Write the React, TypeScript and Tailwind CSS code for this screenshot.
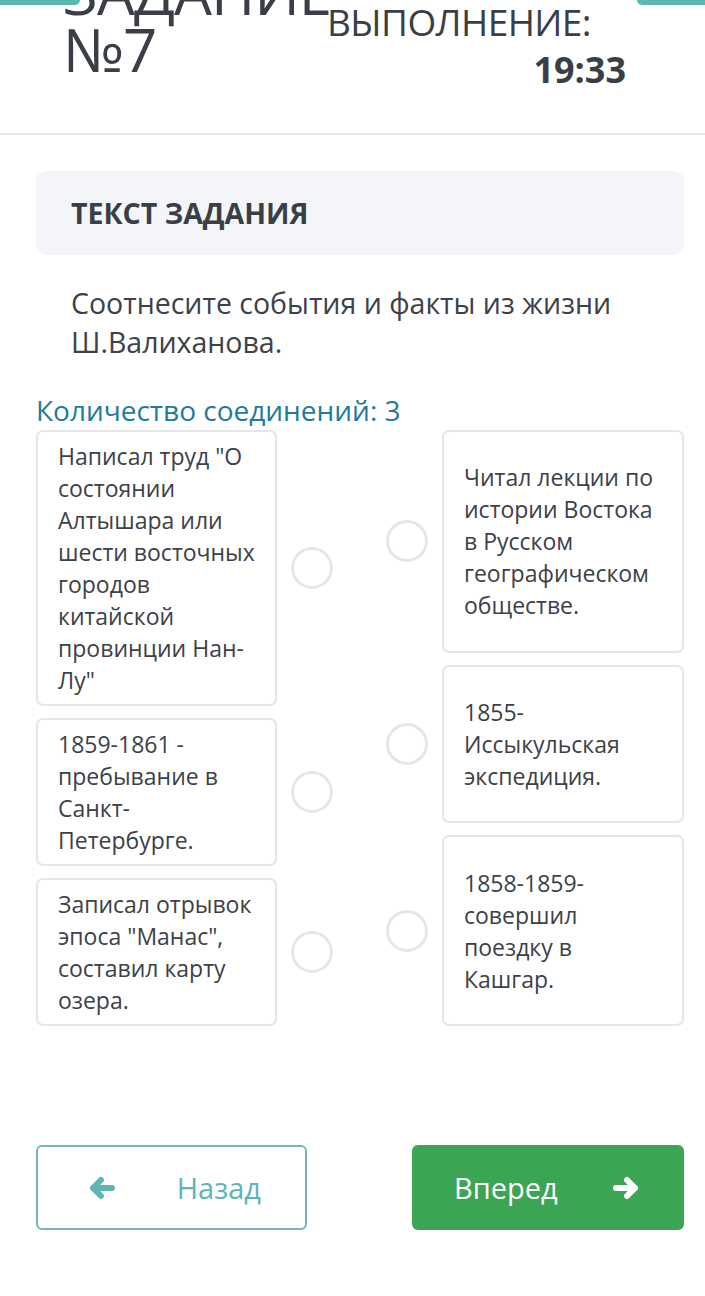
const LEFT_ITEMS = [
  'Написал труд "О\nсостоянии\nАлтышара или\nшести восточных\nгородов\nкитайской\nпровинции Нан-\nЛу"',
  '1859-1861 -\nпребывание в\nСанкт-\nПетербурге.',
  'Записал отрывок\nэпоса "Манас",\nсоставил карту\nозера.',
];

const RIGHT_ITEMS = [
  'Читал лекции по\nистории Востока\nв Русском\nгеографическом\nобществе.',
  '1855-\nИссыкульская\nэкспедиция.',
  '1858-1859-\nсовершил\nпоездку в\nКашгар.',
];

const Circle = () => (
  <div className="w-[42px] h-[42px] shrink-0 self-center rounded-full border-[3px] border-[#e4e6e8]" />
);

const Arrow = ({ dir }: { dir: 'left' | 'right' }) => (
  <svg
    viewBox="0 0 28 24"
    className={`w-[28px] h-[24px] ${dir === 'right' ? 'rotate-180' : ''}`}
    fill="none"
    stroke="currentColor"
    strokeWidth="6"
    strokeLinecap="round"
    strokeLinejoin="round"
  >
    <path d="M5 12H24M13 4L5 12L13 20" />
  </svg>
);

const App = () => {
  return (
    <div
      className="relative w-[705px] min-h-[1296px] bg-white text-[#3d4148] overflow-hidden"
      style={{ fontFamily: '"Open Sans", "Noto Sans", sans-serif' }}
    >
      {/* teal tabs at the very top */}
      <div className="absolute top-0 left-0 z-10 w-[80px] h-[5px] rounded-br-[6px] bg-[#5db7ae]" />
      <div className="absolute top-0 right-0 z-10 w-[68px] h-[5px] rounded-bl-[6px] bg-[#5db7ae]" />

      {/* header */}
      <header className="flex h-[135px] border-b-2 border-[#e6e7e9]">
        <div className="ml-[63px] w-[264px] mt-[-36px] text-[60px] leading-[57px] tracking-[-1px] text-[#3a3e46]">
          <div className="whitespace-nowrap">ЗАДАНИЕ</div>
          <div>№7</div>
        </div>
        <div className="w-[299px] flex flex-col items-end">
          <div className="self-start mt-[3px] text-[37px] leading-[38px] tracking-[-0.6px] text-[#3a3e46] whitespace-nowrap">
            ВЫПОЛНЕНИЕ:
          </div>
          <div className="mt-[9px] text-[36px] leading-[40px] font-bold text-[#3a3e46]">19:33</div>
        </div>
      </header>

      {/* task text */}
      <section className="ml-9 mr-[21px] mt-9 h-[84px] flex items-center px-[35px] rounded-[10px] bg-[#f3f5f8]">
        <h2 className="text-[28.5px] font-bold text-[#3a3e46]">ТЕКСТ ЗАДАНИЯ</h2>
      </section>

      <p className="mx-[71px] mt-[29px] text-[28.5px] leading-[39px]">
        Соотнесите события и факты из жизни Ш.Валиханова.
      </p>

      <div className="ml-9 mt-[30px] text-[28px] leading-[36px] text-[#1e7b9c]">
        Количество соединений: 3
      </div>

      {/* matching columns */}
      <div className="ml-9 mr-[21px] mt-[2px] flex justify-between">
        <div className="w-[297px] flex flex-col gap-3">
          {LEFT_ITEMS.map((text) => (
            <div key={text} className="grow flex items-stretch gap-[14px]">
              <div className="w-[241px] shrink-0 flex items-center pl-5 pr-1 py-2 rounded-[7px] border-2 border-[#e6e6e8] text-[23px] leading-[32px] whitespace-pre-line">
                {text}
              </div>
              <Circle />
            </div>
          ))}
        </div>
        <div className="w-[298px] flex flex-col gap-3">
          {RIGHT_ITEMS.map((text) => (
            <div key={text} className="grow flex items-stretch gap-[14px]">
              <Circle />
              <div className="w-[242px] shrink-0 flex items-center pl-5 pr-1 py-2 rounded-[7px] border-2 border-[#e6e6e8] text-[23px] leading-[32px] whitespace-pre-line">
                {text}
              </div>
            </div>
          ))}
        </div>
      </div>

      {/* navigation */}
      <div className="ml-9 mr-[21px] mt-[119px] flex justify-between">
        <button className="w-[271px] h-[85px] flex items-center justify-between pl-[50px] pr-[44px] rounded-[6px] border-2 border-[#74b6bb] text-[#5fb4b4] text-[29px]">
          <Arrow dir="left" />
          <span>Назад</span>
        </button>
        <button className="w-[272px] h-[85px] flex items-center justify-between pl-[42px] pr-[44px] rounded-[6px] bg-[#3ba553] text-white text-[29px]">
          <span>Вперед</span>
          <Arrow dir="right" />
        </button>
      </div>
    </div>
  );
};

export default App;
